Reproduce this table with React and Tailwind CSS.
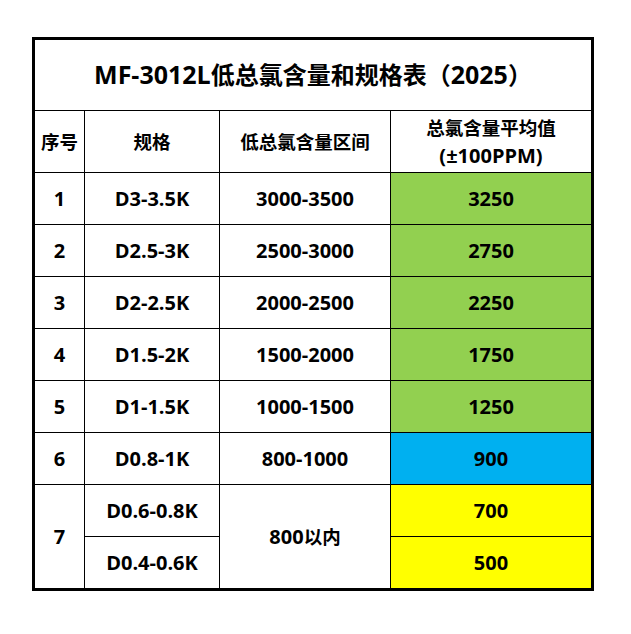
export default function App() {
  const rows = [
    ["1", "D3-3.5K", "3000-3500", "3250", "bg-[#92D050]"],
    ["2", "D2.5-3K", "2500-3000", "2750", "bg-[#92D050]"],
    ["3", "D2-2.5K", "2000-2500", "2250", "bg-[#92D050]"],
    ["4", "D1.5-2K", "1500-2000", "1750", "bg-[#92D050]"],
    ["5", "D1-1.5K", "1000-1500", "1250", "bg-[#92D050]"],
    ["6", "D0.8-1K", "800-1000", "900", "bg-[#00B0F0]"],
  ];
  const cell = "bg-white flex items-center justify-center";
  return (
    <div
      className="min-h-[634px] w-[631px] bg-white pt-[37px] pl-[32px] text-black font-bold"
      style={{ fontFamily: '"Open Sans", "Noto Sans CJK SC", sans-serif' }}
    >
      <div className="w-[562px] border-[3px] border-black bg-black">
        <div className="grid grid-cols-[49px_134px_170px_200px] grid-rows-[70px_61px_repeat(8,51px)] gap-px">
          <div className={`${cell} col-span-4 text-[24px]`}>
            <span className="text-[25px]">MF-3012L</span>低总氯含量和规格表（<span className="text-[25px]">2025</span>）
          </div>
          <div className={`${cell} text-[18.5px]`}>序号</div>
          <div className={`${cell} text-[18.5px]`}>规格</div>
          <div className={`${cell} text-[18.5px]`}>低总氯含量区间</div>
          <div className={`${cell} flex-col leading-[28px]`}>
            <span className="text-[18.5px]">总氯含量平均值</span>
            <span className="text-[20px]">(±100PPM)</span>
          </div>
          {rows.map(([n, s, r, v, bg]) => (
            <div key={n} className="contents">
              <div className={`${cell} text-[20px]`}>{n}</div>
              <div className={`${cell} text-[20px]`}>{s}</div>
              <div className={`${cell} text-[20px]`}>{r}</div>
              <div className={`flex items-center justify-center text-[20px] ${bg}`}>{v}</div>
            </div>
          ))}
          <div className={`${cell} row-span-2 text-[20px]`}>7</div>
          <div className={`${cell} text-[20px]`}>D0.6-0.8K</div>
          <div className={`${cell} row-span-2 text-[20px]`}>
            800<span className="text-[18.5px]">以内</span>
          </div>
          <div className="flex items-center justify-center bg-[#FFFF00] text-[20px]">700</div>
          <div className={`${cell} text-[20px]`}>D0.4-0.6K</div>
          <div className="flex items-center justify-center bg-[#FFFF00] text-[20px]">500</div>
        </div>
      </div>
    </div>
  );
}
